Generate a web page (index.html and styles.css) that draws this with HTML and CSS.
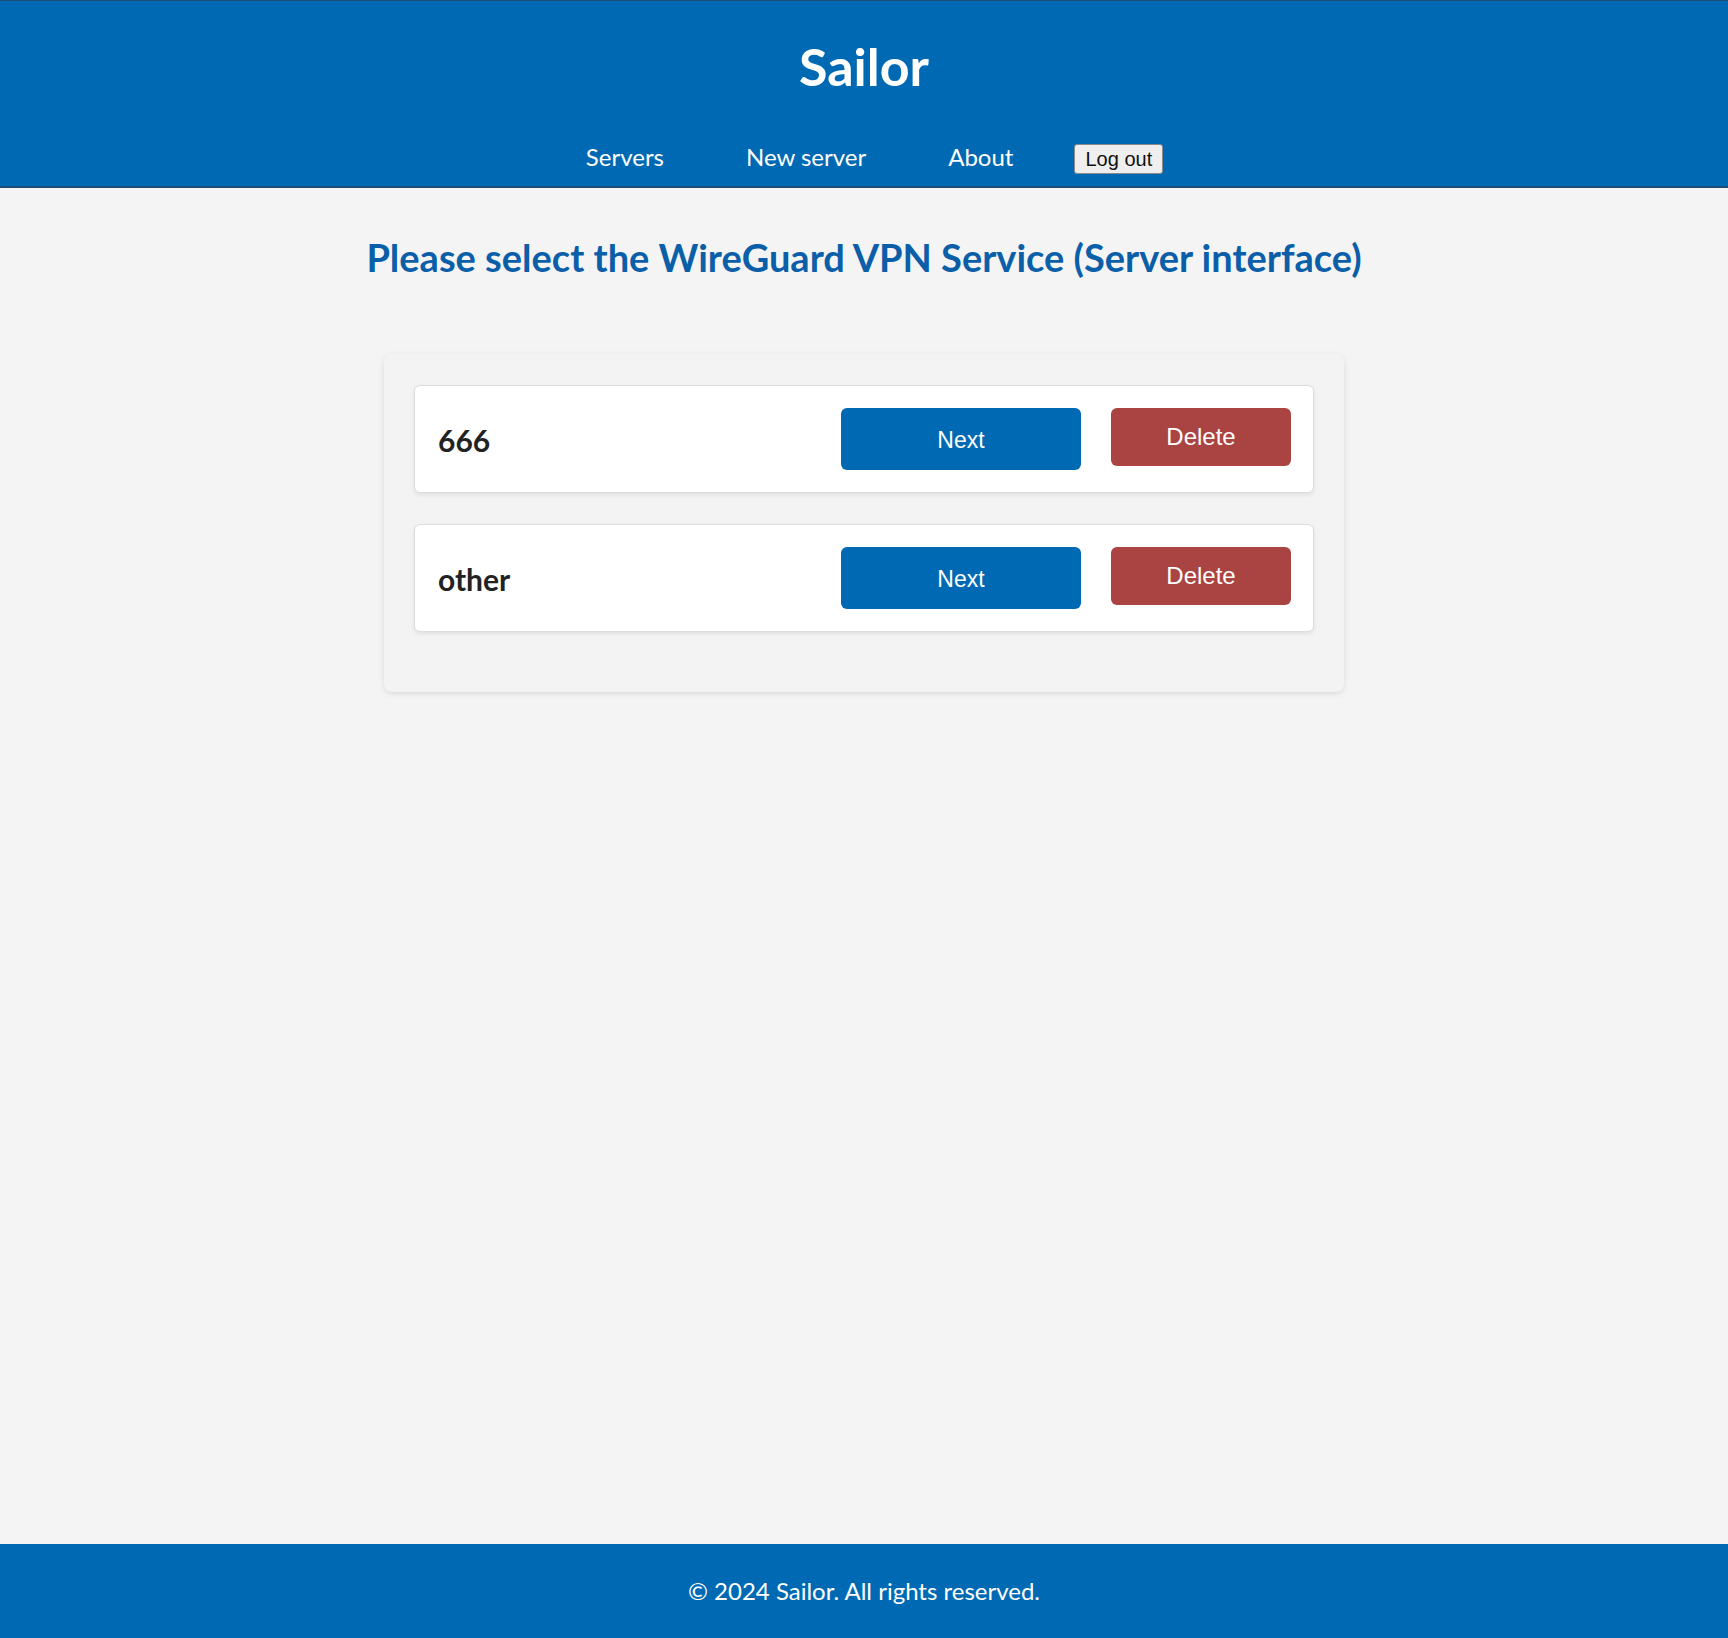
FILE: index.html
```html
<!DOCTYPE html>
<html lang="en">
<head>
<meta charset="utf-8">
<title>Sailor</title>
<link rel="stylesheet" href="styles.css">
</head>
<body>
<header class="site-header">
  <h1 class="brand">Sailor</h1>
  <nav class="main-nav">
    <a class="nav-link" href="#">Servers</a>
    <a class="nav-link" href="#">New server</a>
    <a class="nav-link" href="#">About</a>
    <button class="logout-btn" type="button">Log out</button>
  </nav>
</header>
<main class="content">
  <h2 class="page-title">Please select the WireGuard VPN Service (Server interface)</h2>
  <section class="server-list">
    <div class="server-card">
      <span class="server-name">666</span>
      <button class="btn btn-next" type="button">Next</button>
      <button class="btn btn-delete" type="button">Delete</button>
    </div>
    <div class="server-card">
      <span class="server-name">other</span>
      <button class="btn btn-next" type="button">Next</button>
      <button class="btn btn-delete" type="button">Delete</button>
    </div>
  </section>
</main>
<footer class="site-footer">
  <p class="footer-text">© 2024 Sailor. All rights reserved.</p>
</footer>
</body>
</html>
```
FILE: styles.css
```css
* {
  box-sizing: border-box;
}

html, body {
  margin: 0;
  padding: 0;
}

body {
  min-height: 100vh;
  display: flex;
  flex-direction: column;
  background: #f4f4f4;
  font-family: "Lato", "Open Sans", sans-serif;
  color: #222;
}

.site-header {
  background: #0069b4;
  border-top: 1px solid #1b4f77;
  border-bottom: 2px solid #1b4f77;
  padding: 34px 0 12px;
  text-align: center;
  color: #fff;
}

.brand {
  margin: 0 0 46px;
  font-size: 52px;
  line-height: 1.2;
  font-weight: 700;
}

.main-nav {
  display: flex;
  justify-content: center;
  align-items: baseline;
}

.nav-link {
  color: #fff;
  text-decoration: none;
  font-size: 24px;
  line-height: 1.2;
  padding: 0 41px;
}

.logout-btn {
  margin: 0 20px;
  font-family: "Liberation Sans", Arial, sans-serif;
  font-size: 20px;
  line-height: 24px;
  padding: 2px 10px;
  color: #111;
  background: #efefef;
  border: 1px solid #8a8a8a;
  border-radius: 3px;
}

.content {
  flex: 1;
  padding-top: 47px;
}

.page-title {
  margin: 0;
  text-align: center;
  color: #0b5ea8;
  font-size: 38px;
  line-height: 1.2;
  font-weight: 700;
}

.server-list {
  width: 960px;
  margin: 73px auto 0;
  padding: 31px 30px 29px;
  background: #f3f3f3;
  border-radius: 8px;
  box-shadow: 0 2px 6px rgba(0, 0, 0, 0.1);
}

.server-card {
  display: flex;
  align-items: center;
  height: 108px;
  margin-bottom: 31px;
  padding: 22px 22px 22px 23px;
  background: #fff;
  border: 1px solid #d9dde2;
  border-radius: 6px;
  box-shadow: 0 2px 4px rgba(0, 0, 0, 0.08);
}

.server-name {
  flex: 1;
  margin-top: 3px;
  font-size: 30px;
  line-height: 1.2;
  font-weight: 700;
  color: #222;
}

.btn {
  border: none;
  color: #fff;
  font-family: "Liberation Sans", Arial, sans-serif;
  font-size: 24px;
  border-radius: 6px;
  padding: 0;
}

.btn-next {
  width: 240px;
  height: 62px;
  background: #0069b4;
  font-size: 23px;
  padding-top: 3px;
}

.btn-delete {
  width: 180px;
  height: 58px;
  margin-left: 30px;
  align-self: flex-start;
  background: #a94442;
}

.site-footer {
  background: #0069b4;
  color: #fff;
  text-align: center;
  padding: 35px 0;
}

.footer-text {
  margin: 0;
  font-size: 24px;
  line-height: 24px;
}
```
